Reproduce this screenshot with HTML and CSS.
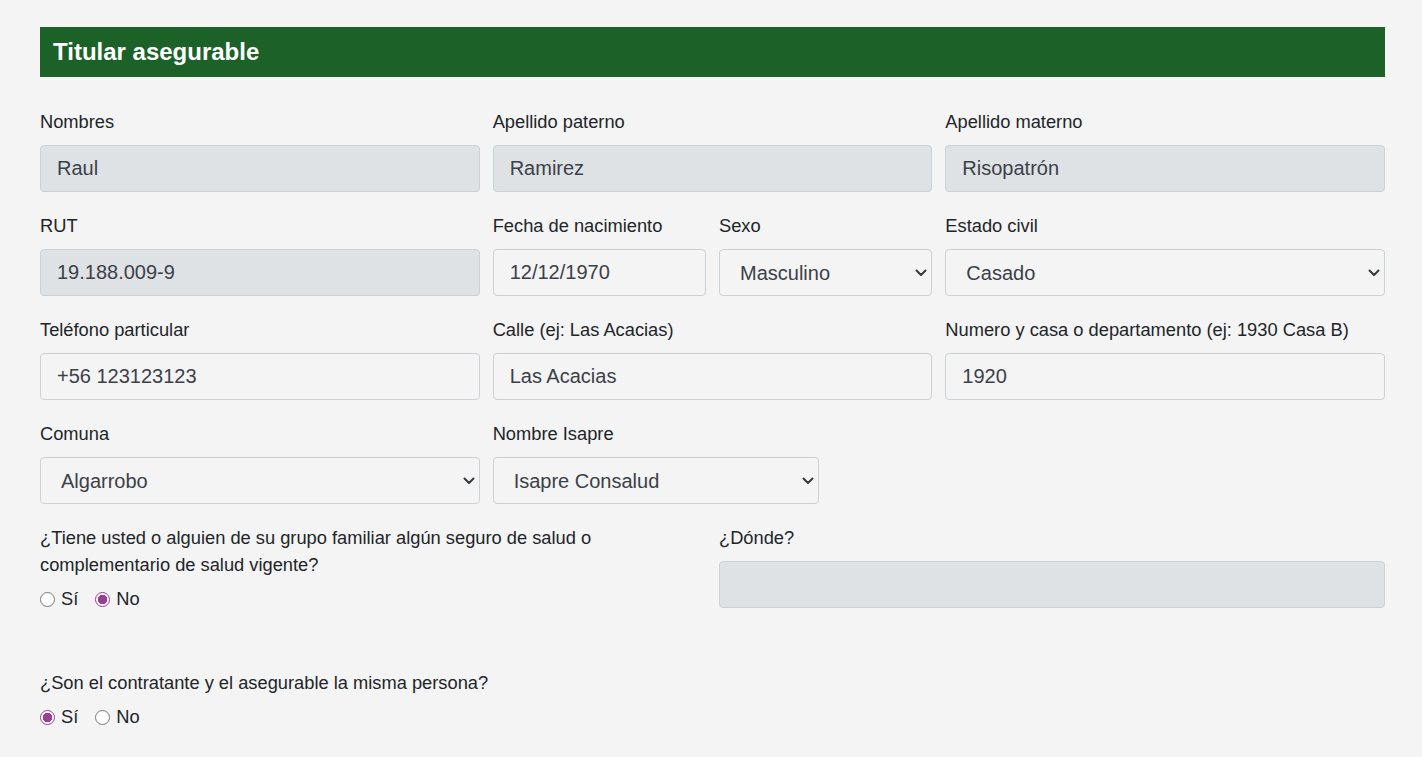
FILE: index.html
```html
<!DOCTYPE html>
<html lang="es">
<head>
<meta charset="utf-8">
<title>Titular asegurable</title>
<link rel="stylesheet" href="styles.css">
</head>
<body>
<div class="page">
  <div class="header"><h1>Titular asegurable</h1></div>

  <div class="row">
    <div class="field c4">
      <label>Nombres</label>
      <input class="ctl" type="text" value="Raul" disabled>
    </div>
    <div class="field c4">
      <label>Apellido paterno</label>
      <input class="ctl" type="text" value="Ramirez" disabled>
    </div>
    <div class="field c4">
      <label>Apellido materno</label>
      <input class="ctl" type="text" value="Risopatrón" disabled>
    </div>
  </div>

  <div class="row">
    <div class="field c4">
      <label>RUT</label>
      <input class="ctl" type="text" value="19.188.009-9" disabled>
    </div>
    <div class="field c2">
      <label>Fecha de nacimiento</label>
      <input class="ctl" type="text" value="12/12/1970">
    </div>
    <div class="field c2">
      <label>Sexo</label>
      <div class="sel">
        <select class="ctl"><option>Masculino</option><option>Femenino</option></select>
        <svg class="chev" width="12" height="8" viewBox="0 0 12 8"><path d="M1.5 1.5 L6 6 L10.5 1.5" fill="none" stroke="#343a40" stroke-width="2" stroke-linecap="round" stroke-linejoin="round"/></svg>
      </div>
    </div>
    <div class="field c4">
      <label>Estado civil</label>
      <div class="sel">
        <select class="ctl"><option>Casado</option><option>Soltero</option></select>
        <svg class="chev" width="12" height="8" viewBox="0 0 12 8"><path d="M1.5 1.5 L6 6 L10.5 1.5" fill="none" stroke="#343a40" stroke-width="2" stroke-linecap="round" stroke-linejoin="round"/></svg>
      </div>
    </div>
  </div>

  <div class="row">
    <div class="field c4">
      <label>Teléfono particular</label>
      <input class="ctl" type="text" value="+56 123123123">
    </div>
    <div class="field c4">
      <label>Calle (ej: Las Acacias)</label>
      <input class="ctl" type="text" value="Las Acacias">
    </div>
    <div class="field c4">
      <label>Numero y casa o departamento (ej: 1930 Casa B)</label>
      <input class="ctl" type="text" value="1920">
    </div>
  </div>

  <div class="row">
    <div class="field c4">
      <label>Comuna</label>
      <div class="sel">
        <select class="ctl"><option>Algarrobo</option></select>
        <svg class="chev" width="12" height="8" viewBox="0 0 12 8"><path d="M1.5 1.5 L6 6 L10.5 1.5" fill="none" stroke="#343a40" stroke-width="2" stroke-linecap="round" stroke-linejoin="round"/></svg>
      </div>
    </div>
    <div class="field c3">
      <label>Nombre Isapre</label>
      <div class="sel">
        <select class="ctl"><option>Isapre Consalud</option></select>
        <svg class="chev" width="12" height="8" viewBox="0 0 12 8"><path d="M1.5 1.5 L6 6 L10.5 1.5" fill="none" stroke="#343a40" stroke-width="2" stroke-linecap="round" stroke-linejoin="round"/></svg>
      </div>
    </div>
  </div>

  <div class="row">
    <div class="field c6">
      <p class="q">¿Tiene usted o alguien de su grupo familiar algún seguro de salud o complementario de salud vigente?</p>
      <div class="radios">
        <label class="r"><input type="radio" name="seguro"><span>Sí</span></label>
        <label class="r"><input type="radio" name="seguro" checked><span>No</span></label>
      </div>
    </div>
    <div class="field c6">
      <label>¿Dónde?</label>
      <input class="ctl" type="text" value="" disabled>
    </div>
  </div>

  <div class="row last">
    <div class="field c12">
      <p class="q">¿Son el contratante y el asegurable la misma persona?</p>
      <div class="radios">
        <label class="r"><input type="radio" name="misma" checked><span>Sí</span></label>
        <label class="r"><input type="radio" name="misma"><span>No</span></label>
      </div>
    </div>
  </div>
</div>
</body>
</html>
```

FILE: styles.css
```css
* { box-sizing: border-box; }

html, body {
  margin: 0;
  padding: 0;
  background: #f4f4f4;
}

body {
  font-family: "Liberation Sans", Arial, Helvetica, sans-serif;
  color: #212529;
}

.page {
  width: 1345px;
  margin: 0 0 0 40px;
  padding-top: 27px;
}

.header {
  background: #1b6128;
  height: 50px;
  display: flex;
  align-items: center;
  padding-left: 13px;
}

.header h1 {
  margin: 0;
  color: #ffffff;
  font-size: 24px;
  font-weight: bold;
}

.row {
  display: grid;
  grid-template-columns: repeat(12, 1fr);
  column-gap: 13px;
}

.header + .row { margin-top: 31px; }

.c2 { grid-column: span 2; }
.c3 { grid-column: span 3; }
.c4 { grid-column: span 4; }
.c6 { grid-column: span 6; }
.c12 { grid-column: span 12; }

.field {
  margin-bottom: 20px;
  min-width: 0;
}

.field > label,
.q {
  display: block;
  font-size: 18.3px;
  line-height: 27px;
  margin: 0 0 10px 0;
  color: #212529;
}

.ctl {
  display: block;
  width: 100%;
  height: 47px;
  border: 1px solid #ccd1d6;
  border-radius: 4px;
  background: #f4f4f4;
  font-family: "Liberation Sans", Arial, Helvetica, sans-serif;
  font-size: 20px;
  color: #3b4148;
  padding: 0 16px;
  margin: 0;
  outline: none;
}

.ctl:disabled {
  background: #dfe2e5;
  color: #3b4148;
  opacity: 1;
  -webkit-text-fill-color: #3b4148;
}

.sel { position: relative; }

select.ctl {
  appearance: none;
  -webkit-appearance: none;
  padding-left: 20px;
  padding-right: 30px;
}

.chev {
  position: absolute;
  right: 5px;
  top: 20px;
  pointer-events: none;
}

.radios {
  display: flex;
  align-items: center;
  gap: 17px;
  height: 22px;
}

.r {
  display: flex;
  align-items: center;
  gap: 6px;
  font-size: 18.3px;
  color: #212529;
}

.r input {
  appearance: none;
  -webkit-appearance: none;
  width: 15px;
  height: 15px;
  margin: 0;
  border: 1px solid #7a7a7a;
  border-radius: 50%;
  background: #ffffff;
}

.r input:checked {
  border-color: #9c3d97;
  background: radial-gradient(circle, #9c3d97 0 4.5px, #ffffff 5px);
}

.row.last { margin-top: 39px; }
```
